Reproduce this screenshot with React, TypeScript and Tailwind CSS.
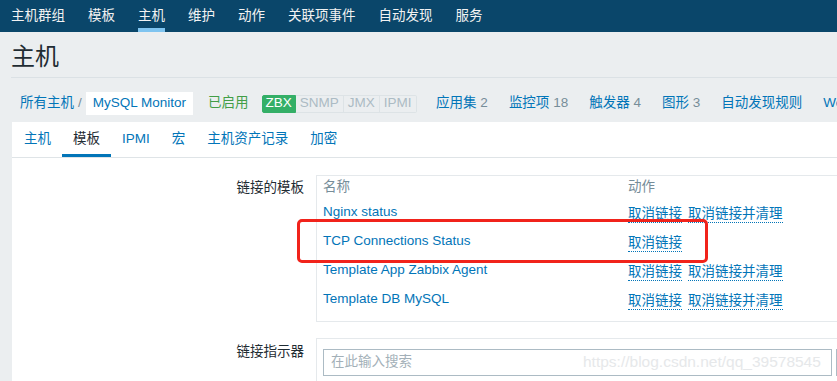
const nav = ['主机群组', '模板', '主机', '维护', '动作', '关联项事件', '自动发现', '服务'];
const tabs = ['主机', '模板', 'IPMI', '宏', '主机资产记录', '加密'];
const badges = ['ZBX', 'SNMP', 'JMX', 'IPMI'];
const counts: [string, string][] = [
  ['应用集', '2'],
  ['监控项', '18'],
  ['触发器', '4'],
  ['图形', '3'],
  ['自动发现规则', ''],
  ['Web 场景', ''],
];
const templates = [
  { name: 'Nginx status', clear: true },
  { name: 'TCP Connections Status', clear: false },
  { name: 'Template App Zabbix Agent', clear: true },
  { name: 'Template DB MySQL', clear: true },
];

function ActionLink({ children }: { children: string }) {
  return (
    <span className="inline-block leading-[17px] border-b border-dotted border-[#0275b8] text-[#0275b8]">
      {children}
    </span>
  );
}

export default function App() {
  return (
    <div
      className="relative w-[837px] h-[381px] overflow-hidden bg-[#ebeef0] text-[13.5px] text-[#1f2c33] whitespace-nowrap"
      style={{ fontFamily: '"Liberation Sans", Arial, "Noto Sans CJK SC", sans-serif' }}
    >
      {/* top menu */}
      <div className="flex h-[32px] bg-[#0a466a] pl-[-1px] text-[#f2f2f2]">
        {nav.map((n) => (
          <div key={n} className="relative flex h-full items-center px-[11.5px] first:pl-[11px]">
            {n}
            {n === '主机' && <div className="absolute bottom-0 left-[11.5px] right-[11.5px] h-[4px] bg-[#7fc4f0]" />}
          </div>
        ))}
      </div>

      <div className="pl-[11px]">
        <div className="border-b border-[#dbe1e5] pt-[10px] pb-[5px] text-[24px] leading-[30px]">主机</div>

        {/* breadcrumbs */}
        <div className="flex items-center pl-[9px] pt-[14px] pb-[7px]">
          <span className="text-[#0275b8]">所有主机</span>
          <span className="mx-[4px] text-[#768d99]">/</span>
          <span className="flex h-[23px] items-center bg-white px-[7px] text-[#0275b8]">MySQL Monitor</span>
          <span className="ml-[15px] text-[#429e47]">已启用</span>
          <div className="ml-[13px] flex">
            {badges.map((b, i) => (
              <span
                key={b}
                className={
                  i === 0
                    ? 'flex h-[18px] items-center rounded-l-[2px] border border-[#34af67] bg-[#34af67] px-[3px] text-white'
                    : 'flex h-[18px] items-center border border-l-0 border-[#dde3e6] px-[4px] text-[#acbbc4] last:rounded-r-[2px]'
                }
              >
                {b}
              </span>
            ))}
          </div>
          <div className="ml-[9px] flex">
            {counts.map(([label, n]) => (
              <span key={label} className="px-[10.5px]">
                <span className="text-[#0275b8]">{label}</span>
                {n && <span className="text-[#768d99]"> {n}</span>}
              </span>
            ))}
          </div>
        </div>

        {/* tab panel */}
        <div className="ml-[1px] w-[900px] bg-white">
          <div className="flex h-[36px] border-b border-[#dfe4e7] pl-[1px]">
            {tabs.map((t) => (
              <div
                key={t}
                className={
                  t === '模板'
                    ? 'flex h-[35px] items-center border-b-[3px] border-[#0275b8] px-[11px] pt-[3px] text-[#1f2c33]'
                    : 'flex h-[35px] items-center border-b-[3px] border-transparent px-[11px] pt-[3px] text-[#0275b8]'
                }
              >
                {t}
              </div>
            ))}
          </div>

          <div className="pt-[17px]">
            <div className="flex">
              <div className="w-[293px] pt-[5px] pr-[1px] text-right leading-[16px]">链接的模板</div>
              <div className="ml-[11px] flex-1 border border-[#e5e9ec] pb-[7px]">
                <div className="flex h-[22px] items-center pl-[6px] text-[#768d99]">
                  <span className="w-[305px]">名称</span>
                  <span>动作</span>
                </div>
                {templates.map((t) => (
                  <div key={t.name} className="flex h-[29px] items-center pl-[6px]">
                    <span className="w-[305px] text-[#0275b8]">{t.name}</span>
                    <span className="flex gap-[6px] pt-[2px]">
                      <ActionLink>取消链接</ActionLink>
                      {t.clear && <ActionLink>取消链接并清理</ActionLink>}
                    </span>
                  </div>
                ))}
              </div>
            </div>

            <div className="mt-[16px] flex">
              <div className="w-[293px] pt-[6px] pr-[1px] text-right leading-[16px]">链接指示器</div>
              <div className="ml-[11px] flex flex-1 items-start border border-[#e5e9ec] pt-[10px] pl-[6px] pb-[10px]">
                <div className="flex h-[27px] w-[509px] items-center border border-[#acbbc4] px-[7px] text-[#a3b0b8]">
                  在此输入搜索
                </div>
                <div className="ml-[4px] h-[27px] w-[60px] border border-[#acbbc4] bg-[#f6f7f8]" />
              </div>
            </div>
          </div>
        </div>
      </div>

      {/* CSDN watermark */}
      <div className="pointer-events-none absolute left-[583px] top-[352px] text-[15.5px] leading-[20px] text-[#e6e8ea]">
        https://blog.csdn.net/qq_39578545
      </div>

      {/* red highlight box */}
      <div className="pointer-events-none absolute left-[297px] top-[219px] h-[44px] w-[411px] rounded-[5px] border-[3px] border-[#f1231b]" />
    </div>
  );
}
